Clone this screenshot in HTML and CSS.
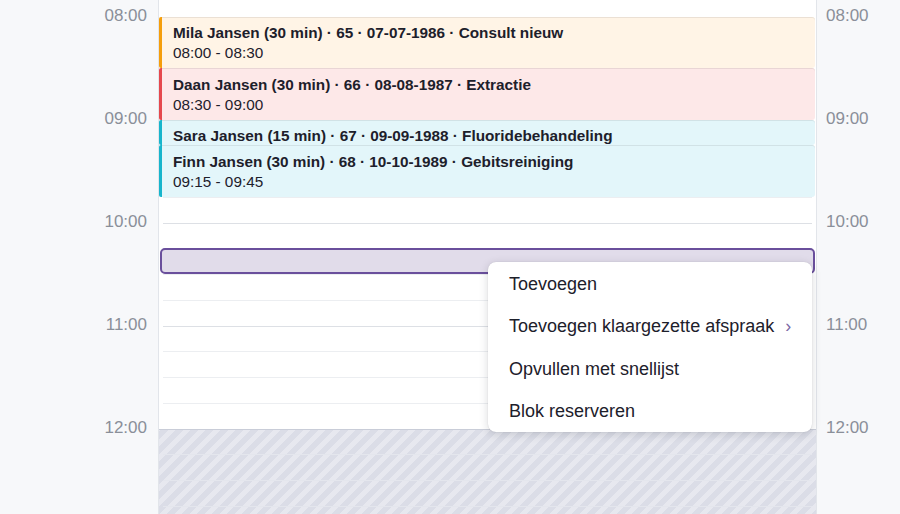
FILE: index.html
```html
<!DOCTYPE html>
<html lang="nl">
<head>
<meta charset="utf-8">
<title>Agenda</title>
<link rel="stylesheet" href="styles.css">
</head>
<body>
<div class="cal">
  <div class="gutter gutter-left">
    <div class="hour">08:00</div>
    <div class="hour">09:00</div>
    <div class="hour">10:00</div>
    <div class="hour">11:00</div>
    <div class="hour">12:00</div>
  </div>

  <div class="col">
    <div class="hatch"></div>

    <div class="line hr r2"></div>
    <div class="line r3"></div>
    <div class="line r4"></div>
    <div class="line r5"></div>
    <div class="line hr r6"></div>
    <div class="line r7"></div>
    <div class="line r8"></div>
    <div class="line r9"></div>
    <div class="line hr r10"></div>
    <div class="line r11"></div>
    <div class="line r12"></div>
    <div class="line r13"></div>
    <div class="line hr r14"></div>
    <div class="line r15"></div>
    <div class="line r16"></div>
    <div class="line r17"></div>
    <div class="line hr r18"></div>
    <div class="line r19"></div>
    <div class="line r20"></div>
    <div class="line r21"></div>

    <div class="event ev-orange ev-mila">
      <div class="ev-title">Mila Jansen (30 min) · 65 · 07-07-1986 · Consult nieuw</div>
      <div class="ev-time">08:00 - 08:30</div>
    </div>
    <div class="event ev-red ev-daan">
      <div class="ev-title">Daan Jansen (30 min) · 66 · 08-08-1987 · Extractie</div>
      <div class="ev-time">08:30 - 09:00</div>
    </div>
    <div class="event ev-cyan ev-sara">
      <div class="ev-title">Sara Jansen (15 min) · 67 · 09-09-1988 · Fluoridebehandeling</div>
    </div>
    <div class="event ev-cyan ev-finn">
      <div class="ev-title">Finn Jansen (30 min) · 68 · 10-10-1989 · Gebitsreiniging</div>
      <div class="ev-time">09:15 - 09:45</div>
    </div>

    <div class="selection"></div>

    <ul class="menu">
      <li class="menu-item">Toevoegen</li>
      <li class="menu-item">Toevoegen klaargezette afspraak <span class="chev">›</span></li>
      <li class="menu-item">Opvullen met snellijst</li>
      <li class="menu-item">Blok reserveren</li>
    </ul>
  </div>

  <div class="gutter gutter-right">
    <div class="hour">08:00</div>
    <div class="hour">09:00</div>
    <div class="hour">10:00</div>
    <div class="hour">11:00</div>
    <div class="hour">12:00</div>
  </div>
</div>
</body>
</html>
```

FILE: styles.css
```css
* { box-sizing: border-box; }

html, body {
  margin: 0;
  padding: 0;
  height: 514px;
  overflow: hidden;
  background: #f7f8fa;
  font-family: "Liberation Sans", Arial, sans-serif;
}

.cal {
  display: grid;
  grid-template-columns: 158px 659px 1fr;
  height: 514px;
}

.gutter {
  background: #f7f8fa;
  padding-top: 6px;
  color: #8a8f99;
  font-size: 17px;
}

.gutter .hour {
  height: 103px;
  line-height: 20px;
}

.gutter-left { text-align: right; padding-right: 11px; }
.gutter-right { padding-left: 9px; }

.col {
  position: relative;
  background: #ffffff;
  border-left: 1px solid #e2e5ea;
  border-right: 1px solid #e2e5ea;
  display: grid;
  grid-template-columns: 1fr;
  grid-template-rows: 16.5px repeat(20, 25.75px);
}

.col > * { grid-column: 1; }

.hatch {
  grid-row: 18 / 22;
  background: repeating-linear-gradient(
    -45deg,
    #dbdde7 0px,
    #dbdde7 5.3px,
    #e7e8ef 5.3px,
    #e7e8ef 10.6px
  );
  border-top: 1px solid #c9cdd8;
}

.line {
  border-top: 1px solid #eceef1;
  margin: 0 4px;
}
.line.hr { border-top-color: #dde0e5; }

.r2 { grid-row: 2; } .r3 { grid-row: 3; } .r4 { grid-row: 4; } .r5 { grid-row: 5; }
.r6 { grid-row: 6; } .r7 { grid-row: 7; } .r8 { grid-row: 8; } .r9 { grid-row: 9; }
.r10 { grid-row: 10; } .r11 { grid-row: 11; } .r12 { grid-row: 12; } .r13 { grid-row: 13; }
.r14 { grid-row: 14; } .r15 { grid-row: 15; } .r16 { grid-row: 16; } .r17 { grid-row: 17; }
.r18 { grid-row: 18; } .r19 { grid-row: 19; } .r20 { grid-row: 20; } .r21 { grid-row: 21; }
.r19.line, .r20.line, .r21.line { border-top-color: #e4e6ed; }
.r18.line { border-top-color: transparent; }

.event {
  margin-right: 1px;
  border-left: 3px solid;
  border-radius: 2px 3px 3px 2px;
  padding: 6.5px 0 0 11px;
  overflow: hidden;
  color: #1d202b;
  font-size: 15.3px;
  line-height: 20px;
  box-shadow: inset 0 1px 0 rgba(0, 0, 0, 0.08);
  white-space: nowrap;
}
.ev-title { font-weight: bold; }

.ev-orange { border-left-color: #f59e0b; background: #fff4e6; }
.ev-red { border-left-color: #e5484d; background: #fde8e8; }
.ev-cyan { border-left-color: #17b5cc; background: #e3f6fa; }

.ev-mila { grid-row: 2 / 4; }
.ev-daan { grid-row: 4 / 6; }
.ev-sara { grid-row: 6 / 7; }
.ev-finn { grid-row: 7 / 9; }

.selection {
  grid-row: 11 / 12;
  margin: 0 1px;
  border: 2px solid #6a4f9c;
  border-radius: 5px;
  background: #e1dcea;
}

.menu {
  position: absolute;
  top: 262px;
  left: 329px;
  width: 324px;
  margin: 0;
  padding: 1px 0 0;
  list-style: none;
  background: #ffffff;
  border-radius: 8px;
  box-shadow: 0 2px 10px rgba(20, 25, 40, 0.16), 0 0 1px rgba(20, 25, 40, 0.2);
}

.menu-item {
  height: 42.25px;
  line-height: 42.25px;
  padding-left: 21px;
  font-size: 18px;
  color: #1d202b;
}

.chev {
  margin-left: 6px;
  color: #7b68a6;
  font-size: 18px;
}
```
